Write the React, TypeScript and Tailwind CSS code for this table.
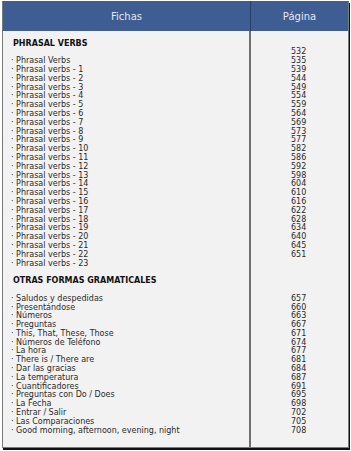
const phrasal = [
  "Phrasal Verbs",
  ...Array.from({ length: 23 }, (_, i) => `Phrasal verbs - ${i + 1}`),
];
const phrasalPages = [
  532, 535, 539, 544, 549, 554, 559, 564, 569, 573, 577, 582, 586, 592, 598,
  604, 610, 616, 622, 628, 634, 640, 645, 651,
];

const otras = [
  ["Saludos y despedidas", 657],
  ["Presentándose", 660],
  ["Números", 663],
  ["Preguntas", 667],
  ["This, That, These, Those", 671],
  ["Números de Teléfono", 674],
  ["La hora", 677],
  ["There is / There are", 681],
  ["Dar las gracias", 684],
  ["La temperatura", 687],
  ["Cuantificadores", 691],
  ["Preguntas con Do / Does", 695],
  ["La Fecha", 698],
  ["Entrar / Salir", 702],
  ["Las Comparaciones", 705],
  ["Good morning, afternoon, evening, night", 708],
] as const;

const Line = ({ children }: { children?: React.ReactNode }) => (
  <div className="h-[8.8px] leading-[8.8px] whitespace-nowrap">{children}</div>
);

export default function App() {
  return (
    <div
      className="w-[351px] h-[451px] bg-white pl-[2px] pr-[2px] pt-[1px]"
      style={{ fontFamily: '"DejaVu Sans", Verdana, sans-serif' }}
    >
      <div className="border-l border-r border-b border-[#7a7a7a] shadow-[1px_2px_0_#111]">
        <div className="flex h-[30px] bg-[#3e5d92] text-[10px] text-[#e3e8f1]">
          <div className="flex w-[248px] items-center justify-center border-r border-[#2a3f66]">
            Fichas
          </div>
          <div className="flex flex-1 items-center justify-center">Página</div>
        </div>
        <div className="flex h-[416px] bg-[#f2f2f2] text-[8px] text-[#2a2a2a]">
          <div className="w-[248px] border-r-2 border-[#6f6f6f] pl-[8px] pt-[8.6px]">
            <Line>
              <span className="font-bold text-[#111] pl-[2px]">PHRASAL VERBS</span>
            </Line>
            <Line />
            {phrasal.map((p) => (
              <Line key={p}>· {p}</Line>
            ))}
            <Line />
            <Line>
              <span className="font-bold text-[#111] pl-[2px]">
                OTRAS FORMAS GRAMATICALES
              </span>
            </Line>
            <Line />
            {otras.map(([t]) => (
              <Line key={t}>· {t}</Line>
            ))}
          </div>
          <div className="flex-1 pl-[40px] pt-[8.6px]">
            <Line />
            {phrasalPages.map((n) => (
              <Line key={n}>{n}</Line>
            ))}
            <Line />
            <Line />
            <Line />
            <Line />
            {otras.map(([t, n]) => (
              <Line key={t}>{n}</Line>
            ))}
          </div>
        </div>
      </div>
    </div>
  );
}
